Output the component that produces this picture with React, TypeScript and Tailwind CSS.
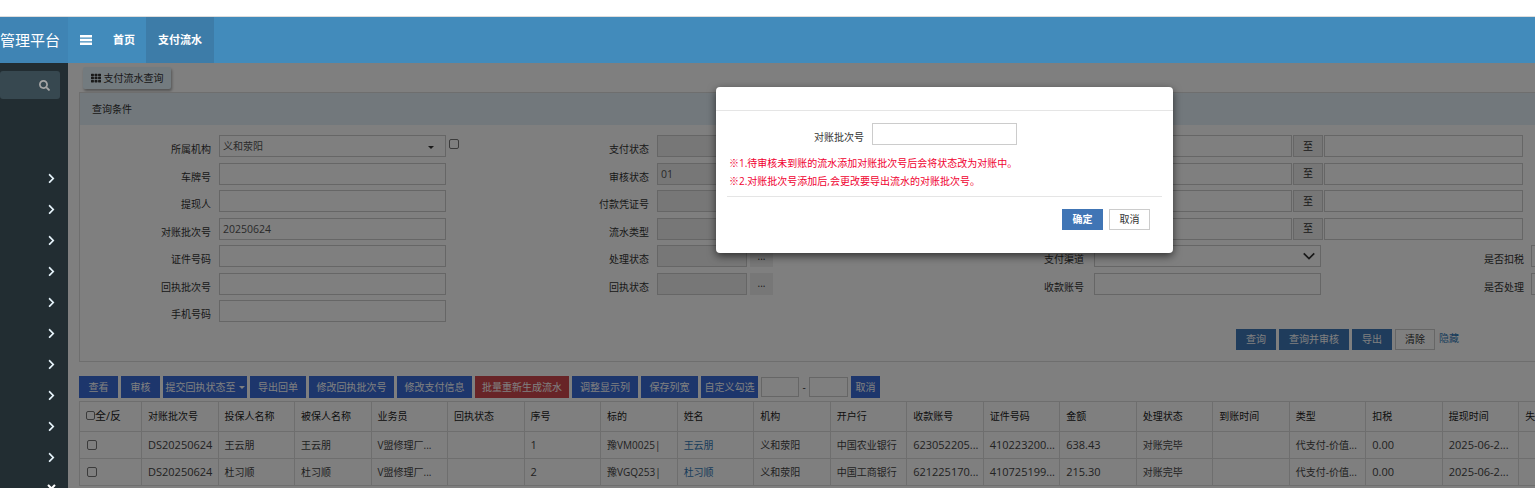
import { FaAngleDoubleDown, FaChevronRight, FaSearch, FaTh } from 'react-icons/fa'

const font = 'font-["Open_Sans","Noto_Sans_CJK_SC",sans-serif]'

const inputCls = 'h-[22px] shrink-0 border border-[#ccc] bg-white px-[3px] text-[10.5px] leading-[20px] text-[#555]'
const greyCls = 'h-[22px] shrink-0 border border-[#ccc] bg-[#eee] px-[3px] text-[10.5px] leading-[20px] text-[#555]'

const col1 = [
  ['所属机构', ''],
  ['车牌号', ''],
  ['提现人', ''],
  ['对账批次号', '20250624'],
  ['证件号码', ''],
  ['回执批次号', ''],
  ['手机号码', ''],
]
const col2 = [
  ['支付状态', ''],
  ['审核状态', '01'],
  ['付款凭证号', ''],
  ['流水类型', ''],
  ['处理状态', ''],
  ['回执状态', ''],
]

const toolbar = [
  { label: '查看', w: 'w-[39px]' },
  { label: '审核', w: 'w-[39px]' },
  { label: '提交回执状态至', w: 'w-[84px]', caret: true },
  { label: '导出回单', w: 'w-[56px]' },
  { label: '修改回执批次号', w: 'w-[85px]' },
  { label: '修改支付信息', w: 'w-[75px]' },
  { label: '批量重新生成流水', w: 'w-[94px]', red: true },
  { label: '调整显示列', w: 'w-[66px]' },
  { label: '保存列宽', w: 'w-[57px]' },
  { label: '自定义勾选', w: 'w-[57px]' },
]

const headers = ['对账批次号', '投保人名称', '被保人名称', '业务员', '回执状态', '序号', '标的', '姓名', '机构', '开户行', '收款账号', '证件号码', '金额', '处理状态', '到账时间', '类型', '扣税', '提现时间', '失败原因']
const rows = [
  ['DS20250624', '王云朋', '王云朋', 'V盟修理厂...', '', '1', '豫VM0025|', '王云朋', '义和荥阳', '中国农业银行', '623052205...', '410223200...', '638.43', '对账完毕', '', '代支付-价值...', '0.00', '2025-06-2...', ''],
  ['DS20250624', '杜习顺', '杜习顺', 'V盟修理厂...', '', '2', '豫VGQ253|', '杜习顺', '义和荥阳', '中国工商银行', '621225170...', '410725199...', '215.30', '对账完毕', '', '代支付-价值...', '0.00', '2025-06-2...', ''],
]

function Label({ w, text }: { w: string; text: string }) {
  return <label className={`${w} shrink-0 pt-[4px] text-right text-[10px] leading-[20px] text-[#333]`}>{text}</label>
}

function RangeRow() {
  return (
    <div className="flex h-[27.5px] items-start">
      <Label w="w-[184px]" text="" />
      <div className={`${inputCls} ml-[10px] w-[198px]`} />
      <div className="ml-px flex h-[22px] w-[30px] shrink-0 items-center justify-center border border-[#ccc] bg-[#eee] text-[10px] text-[#333]">至</div>
      <div className={`${inputCls} ml-px w-[199px]`} />
    </div>
  )
}

export default function App() {
  return (
    <div className={`${font} h-screen w-screen overflow-hidden bg-white`}>
      <div className="h-[17px] border-b border-[#ddd] bg-white" />
      <header className="flex h-[46px] bg-[#428bbb] text-white">
        <div className="flex w-[68px] shrink-0 items-center justify-end overflow-hidden bg-[#3f84b4] pr-2 text-[15px] whitespace-nowrap">
          管理平台
        </div>
        <div className="flex w-[45px] items-center pl-[12px]">
          <svg viewBox="0 0 12 10" className="h-[10px] w-[12px] fill-white">
            <rect width="12" height="2.5" />
            <rect y="3.75" width="12" height="2.5" />
            <rect y="7.5" width="12" height="2.5" />
          </svg>
        </div>
        <div className="flex w-[33px] items-center text-[11px] font-bold">首页</div>
        <div className="flex w-[68px] items-center justify-center bg-[#3d7ca8] text-[11px] font-bold">支付流水</div>
      </header>

      <div className="flex h-[425px]">
        <aside className="flex w-[68px] shrink-0 flex-col items-end overflow-hidden bg-[#222d32]">
          <div className="mt-2 mr-2 flex h-[28px] w-[60px] shrink-0 items-center justify-end rounded-[3px] bg-[#374850] pr-[10px]">
            <FaSearch className="size-[11px] text-[#a5a5a5]" />
          </div>
          <div className="mt-[74px] mr-[10px] flex shrink-0 flex-col items-center gap-[20px]">
            {Array.from({ length: 10 }).map((_, i) => (
              <FaChevronRight key={i} className="size-[11px] shrink-0 text-[#e6f3fa]" />
            ))}
            <FaAngleDoubleDown className="size-[13px] shrink-0 text-white" />
          </div>
        </aside>

        <main className="relative min-w-0 flex-1 overflow-hidden bg-white">
          <div className="ml-[15px] mt-1 flex h-[22px] w-[88px] items-center justify-center gap-[3px] rounded-[2px] bg-[#e6f6ff] text-[10px] text-[#333] shadow-[1px_2px_3px_rgba(0,0,0,0.35)]">
            <FaTh className="size-[10px]" />
            支付流水查询
          </div>

          <section className="ml-[11px] mt-[3px] h-[270px] w-[1530px] border border-[#ddd]">
            <div className="flex h-[32px] items-center bg-[#e5f0f8] pl-3 text-[10px] text-[#333]">查询条件</div>
            <div className="flex pt-[10px]">
              <div className="w-[380px] shrink-0">
                {col1.map(([label, value], i) => (
                  <div key={label} className="flex h-[27.5px] items-start">
                    <Label w="w-[131px]" text={label} />
                    {i === 0 ? (
                      <div className="relative ml-2 flex h-[22px] w-[227px] items-center border border-[#ccc] bg-white px-[3px] text-[10px] text-[#555]">
                        义和荥阳
                        <span className="absolute right-[11px] top-[10px] border-x-[3px] border-t-[3px] border-x-transparent border-t-[#333]" />
                      </div>
                    ) : (
                      <div className={`${inputCls} ml-2 w-[227px]`}>{value}</div>
                    )}
                    {i === 0 && <input type="checkbox" className="ml-[3px] mt-[4px] size-[10px] appearance-none rounded-[2px] border border-[#777] bg-white" />}
                  </div>
                ))}
              </div>

              <div className="w-[440px] shrink-0">
                {col2.map(([label, value], i) => (
                  <div key={label} className="flex h-[27.5px] items-start">
                    <Label w="w-[189px]" text={label} />
                    <div className={`${greyCls} ml-[8px] w-[90px]`}>{value}</div>
                    {i >= 4 && <div className="ml-[3px] flex h-[22px] w-[23px] items-center justify-center bg-[#eee] text-[10px] text-[#333]">...</div>}
                  </div>
                ))}
              </div>

              <div className="shrink-0">
                <RangeRow />
                <RangeRow />
                <RangeRow />
                <RangeRow />
                <div className="flex h-[27.5px] items-start">
                  <Label w="w-[184px]" text="支付渠道" />
                  <div className={`${inputCls} ml-[10px] flex w-[227px] items-center justify-end pr-[4px]`}>
                    <svg viewBox="0 0 16 10" className="h-[10px] w-[14px] fill-none stroke-[#333] stroke-2">
                      <path d="M2 2l6 6 6-6" />
                    </svg>
                  </div>
                  <Label w="w-[203px]" text="是否扣税" />
                  <div className={`${inputCls} ml-[7px] w-[60px]`} />
                </div>
                <div className="flex h-[27.5px] items-start">
                  <Label w="w-[184px]" text="收款账号" />
                  <div className={`${inputCls} ml-[10px] w-[227px]`} />
                  <Label w="w-[203px]" text="是否处理" />
                  <div className={`${inputCls} ml-[7px] w-[60px]`} />
                </div>
              </div>
            </div>

            <div className="mt-[1px] flex items-start pl-[1156px] text-[10px]">
              <button className="h-[21px] w-[40px] bg-[#3f78b8] text-white">查询</button>
              <button className="ml-[3px] h-[21px] w-[70px] bg-[#3f78b8] text-white">查询并审核</button>
              <button className="ml-[3px] h-[21px] w-[40px] bg-[#3f78b8] text-white">导出</button>
              <button className="ml-[3px] h-[21px] w-[40px] border border-[#ccc] bg-white text-[#333]">清除</button>
              <a className="ml-1 leading-[18px] text-[#337ab7]">隐藏</a>
            </div>
          </section>

          <div className="ml-[11px] mt-[14px] flex h-[22px] items-stretch gap-[3px] text-[10px] text-white">
            {toolbar.map((b) => (
              <button key={b.label} className={`${b.w} flex items-center justify-center gap-[3px] whitespace-nowrap ${b.red ? 'bg-[#d0484e]' : 'bg-[#3a6cd8]'}`}>
                {b.label}
                {b.caret && <span className="border-x-[3px] border-t-[3px] border-x-transparent border-t-white" />}
              </button>
            ))}
            <div className="my-px w-[38px] border border-[#ccc] bg-white" />
            <span className="flex w-[4px] items-center justify-center text-[#333]">-</span>
            <div className="my-px w-[39px] border border-[#ccc] bg-white" />
            <button className="w-[29px] bg-[#3a6cd8]">取消</button>
          </div>

          <table className="ml-[11px] mt-[3px] w-[1517px] table-fixed border-collapse text-left text-[10px] text-[#333]">
            <colgroup>
              <col className="w-[62px]" />
              {headers.map((h) => (
                <col key={h} className="w-[76.5px]" />
              ))}
            </colgroup>
            <thead>
              <tr className="h-[30px]">
                <th className="border border-[#ddd] px-[6px] font-normal text-[#222]">
                  <span className="flex items-center text-[11px]">
                    <span className="mb-[2px] size-[9px] rounded-[2px] border border-[#777] bg-white" />全/反
                  </span>
                </th>
                {headers.map((h) => (
                  <th key={h} className="overflow-hidden border border-[#ddd] px-[6px] font-normal whitespace-nowrap text-[#222]">{h}</th>
                ))}
              </tr>
            </thead>
            <tbody>
              {rows.map((row) => (
                <tr key={row[5]} className="h-[27px]">
                  <td className="border border-[#ddd] px-[7px]">
                    <span className="block size-[10px] rounded-[2px] border border-[#777] bg-white" />
                  </td>
                  {row.map((cell, i) => (
                    <td key={i} className={`overflow-hidden border border-[#ddd] px-[6px] whitespace-nowrap ${/^[\x00-\x7f]*$/.test(cell) ? 'text-[11px]' : 'text-[10px]'} ${i === 7 ? 'text-[#337ab7]' : 'text-[#444]'}`}>{cell}</td>
                  ))}
                </tr>
              ))}
            </tbody>
          </table>

          <div className="absolute inset-0 bg-black/50" />

          <div className="absolute left-[648px] top-[24px] h-[166px] w-[457px] rounded-[4px] bg-white text-[10px] text-[#333] shadow-[0_3px_9px_rgba(0,0,0,0.6)]">
            <div className="h-[24px] border-b border-[#e5e5e5]" />
            <div className="mt-[12px] flex items-start">
              <label className="w-[148px] pt-[4px] text-right leading-[20px]">对账批次号</label>
              <div className="ml-2 h-[22px] w-[145px] border border-[#ccc]" />
            </div>
            <p className="ml-[13px] mt-[7px] leading-[18px] text-[#f00030]">※1.待审核未到账的流水添加对账批次号后会将状态改为对账中。</p>
            <p className="ml-[13px] leading-[18px] text-[#f00030]">※2.对账批次号添加后,会更改要导出流水的对账批次号。</p>
            <div className="mx-[11px] mt-[6px] border-t border-[#e5e5e5]" />
            <div className="mt-[12px] flex justify-end gap-[6px] pr-[23px]">
              <button className="h-[21px] w-[41px] bg-[#4075b5] font-bold text-white">确定</button>
              <button className="h-[21px] w-[41px] border border-[#ccc] bg-white">取消</button>
            </div>
          </div>
        </main>
      </div>
    </div>
  )
}
